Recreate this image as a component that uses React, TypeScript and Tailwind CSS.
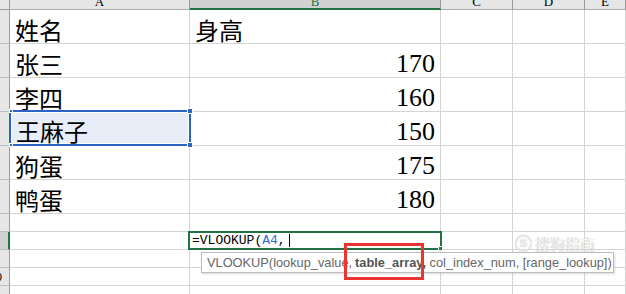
import React from "react";

const cjk = "font-['SimSun','Noto_Sans_CJK_SC',sans-serif]";

const cols = [
  { key: "A", w: "w-[180px]" },
  { key: "B", w: "w-[251px]" },
  { key: "C", w: "w-[72px]" },
  { key: "D", w: "w-[72px]" },
  { key: "E", w: "flex-1" },
];

const people = [
  { name: "张三", height: 170 },
  { name: "李四", height: 160 },
  { name: "王麻子", height: 150 },
  { name: "狗蛋", height: 175 },
  { name: "鸭蛋", height: 180 },
];

function RowHead({ n, active }: { n: number; active?: boolean }) {
  return (
    <div
      className={`w-[10px] shrink-0 overflow-hidden border-b border-r ${
        active ? "bg-[#d2d2d2] border-r-[#217346] border-r-2" : "bg-[#e6e6e6] border-r-[#9b9b9b]"
      } border-b-[#bdbdbd] flex items-center`}
    >
      <div className="w-[26px] -ml-[17px] shrink-0 text-center text-[12px] text-black font-['Liberation_Serif',serif]">{n}</div>
    </div>
  );
}

function Row({
  n,
  h,
  active,
  children,
}: {
  n: number;
  h: string;
  active?: boolean;
  children?: React.ReactNode[];
}) {
  return (
    <div className={`flex ${h}`}>
      <RowHead n={n} active={active} />
      {cols.map((c, i) => (
        <div key={c.key} className={`${c.w} shrink-0 border-b border-r border-[#d4d4d4] relative`}>
          {children?.[i]}
        </div>
      ))}
    </div>
  );
}

function NameCell({ text }: { text: string }) {
  return <div className={`h-full flex items-end pl-[5px] pb-[1px] text-[24px] leading-none text-black ${cjk}`}>{text}</div>;
}

function NumCell({ v }: { v: number }) {
  return (
    <div className="h-full flex items-end justify-end pr-[5px] text-[26px] leading-none text-black font-['Liberation_Serif',serif]">
      {v}
    </div>
  );
}

export default function App() {
  return (
    <div className="w-[626px] h-[294px] overflow-hidden relative bg-white">
      {/* column headers */}
      <div className="flex h-[10px]">
        <div className="w-[10px] shrink-0 bg-[#e6e6e6] border-r border-b border-[#9b9b9b]" />
        {cols.map((c) => {
          const sel = c.key === "B";
          return (
            <div
              key={c.key}
              className={`${c.w} shrink-0 overflow-hidden flex justify-center border-r border-r-[#9b9b9b] ${
                sel ? "bg-[#d2d2d2] border-b-2 border-b-[#217346] text-[#217346]" : "bg-[#e6e6e6] border-b border-b-[#ababab] text-black"
              }`}
            >
              <span className="text-[13px] leading-none -mt-[5px] font-['Liberation_Serif',serif]">{c.key}</span>
            </div>
          );
        })}
      </div>

      <Row n={1} h="h-[34px]">
        {[<NameCell key="a" text="姓名" />, <NameCell key="b" text="身高" />]}
      </Row>
      {people.map((p, i) => (
        <Row key={p.name} n={i + 2} h="h-[34px]">
          {[
            i === 2 ? (
              <div key="a" className="absolute -left-[1px] -top-[2px] w-[182px] h-[36px] border-2 border-[#2b64c6] bg-[#e8eef8] z-10">
                <div className="h-full border border-white flex items-end pl-[4px]">
                  <span className={`text-[24px] leading-none text-black ${cjk}`}>{p.name}</span>
                </div>
                <span className="absolute -left-[2px] -top-[3px] w-[4px] h-[4px] bg-[#2b64c6] border border-white" />
                <span className="absolute -right-[4px] -top-[4px] w-[6px] h-[6px] bg-[#2b64c6] border border-white" />
                <span className="absolute -left-[2px] -bottom-[3px] w-[4px] h-[4px] bg-[#2b64c6] border border-white" />
                <span className="absolute -right-[4px] -bottom-[4px] w-[6px] h-[6px] bg-[#2b64c6] border border-white" />
              </div>
            ) : (
              <NameCell key="a" text={p.name} />
            ),
            <NumCell key="b" v={p.height} />,
          ]}
        </Row>
      ))}
      <Row n={7} h="h-[18px]" />
      <Row n={8} h="h-[18px]" active>
        {[
          null,
          <div
            key="b"
            className="absolute -left-[2px] -top-[1px] w-[254px] h-[19px] border-2 border-[#217346] z-10 flex items-center pl-[2px] text-[13px] leading-none text-black font-['Liberation_Mono',monospace]"
          >
            <span>=VLOOKUP(</span>
            <span className="text-[#2f6bcb]">A4</span>
            <span>,</span>
            <span className="ml-[3px] w-px h-[13px] bg-black" />
            <span className="absolute -right-[3px] -bottom-[3px] w-[5px] h-[5px] bg-[#217346] border border-white" />
          </div>,
        ]}
      </Row>
      <Row n={9} h="h-[18px]" />
      <Row n={10} h="h-[18px]" />
      <Row n={11} h="h-[18px]" />

      {/* function argument hint */}
      <div className="absolute left-[201px] top-[252px] w-[413px] h-[21px] pl-[5px] flex items-center bg-white border border-[#bdbdbd] shadow-[1px_1px_2px_rgba(0,0,0,0.15)] z-20 text-[12.8px] text-[#666] font-['Liberation_Sans',sans-serif] whitespace-nowrap">
        VLOOKUP(lookup_value,<b className="ml-[3px] font-bold text-[#555]">table_array,</b>&nbsp;col_index_num, [range_lookup])
      </div>

      {/* red highlight */}
      <div className="absolute left-[344px] top-[243px] w-[80px] h-[37px] border-[3px] border-[#ee3333] z-30" />

      {/* watermark */}
      <div className="absolute left-[515px] top-[235px] flex items-center gap-[3px] z-20 text-[#f2f2f2] [text-shadow:0_0_1px_#a0a0a0]">
        <span className="w-[17px] h-[17px] rounded-full border-2 border-[#e8e8e8] shadow-[0_0_1px_#a0a0a0] flex items-center justify-center text-[11px] font-bold font-['Liberation_Sans',sans-serif]">
          S
        </span>
        <span className={`text-[15px] leading-none ${cjk}`}>搜狗指南</span>
      </div>
    </div>
  );
}
